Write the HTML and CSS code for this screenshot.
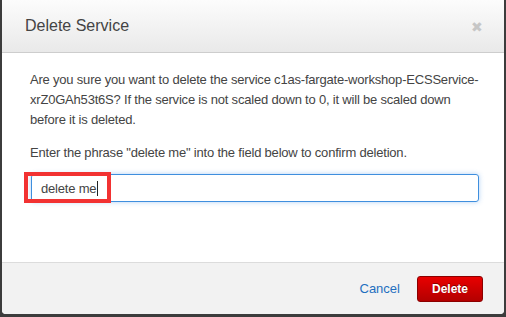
FILE: index.html
```html
<!doctype html>
<html lang="en">
  <head>
    <meta charset="UTF-8" />
    <title>Delete Service</title>
    <link rel="stylesheet" href="styles.css">
  </head>
  <body>
    <div class="c-modal">
      <div class="c-modal__header">
        <h1 class="c-modal__title">Delete Service</h1>
        <span class="c-modal__close">&#x2716;</span>
      </div>

      <div class="c-modal__body">
        <p>
          Are you sure you want to delete the service c1as-fargate-workshop-ECSService-xrZ0GAh53t6S? If the service is not
          scaled down to 0, it will be scaled down before it is deleted.
        </p>

        <p>Enter the phrase "delete me" into the field below to confirm deletion.</p>

        <div class="c-field">
          <div class="c-field__input">delete me<span class="c-field__caret"></span></div>
          <div class="c-field__highlight"></div>
        </div>
      </div>

      <div class="c-modal__footer">
        <a class="c-modal__cancel" href="#">Cancel</a>
        <button class="c-modal__delete" type="button">Delete</button>
      </div>
    </div>
  </body>
</html>
```

FILE: styles.css
```css
html,
body {
  margin: 0;
  padding: 0;
  height: 100%;
}

body {
  background: #3c3c3c;
  font-family: 'Liberation Sans', Arial, sans-serif;
  color: #444;
  overflow: hidden;
}

.c-modal {
  display: flex;
  flex-direction: column;
  height: 314px;
  margin: 0 2px 0 2px;
  background: #fff;
  border-radius: 0 0 4px 4px;
  overflow: hidden;
}

.c-modal__header {
  display: flex;
  align-items: center;
  justify-content: space-between;
  height: 52px;
  padding: 0 21px 0 23px;
  background: linear-gradient(#fcfcfc, #e9e9e9);
  border-bottom: 1px solid #cdcdcd;
}

.c-modal__title {
  margin: 0;
  font-size: 16px;
  font-weight: normal;
  color: #444;
}

.c-modal__close {
  font-size: 14px;
  color: #c6c6c6;
  padding-top: 2px;
}

.c-modal__body {
  flex: 1;
  padding: 17px 18px 0 28px;
}

.c-modal__body p {
  margin: 0 0 13px;
  font-size: 13px;
  line-height: 20px;
  letter-spacing: -0.2px;
  color: #444;
}

.c-modal__body p:nth-of-type(2) {
  margin-bottom: 11px;
}

.c-field {
  position: relative;
}

.c-field__input {
  display: flex;
  align-items: center;
  height: 26px;
  width: 428px;
  margin-left: 1px;
  padding: 0 9px;
  border: 1px solid #3f8fde;
  border-radius: 3px;
  box-shadow: 0 0 5px rgba(80, 150, 230, 0.45);
  font-size: 13px;
  letter-spacing: -0.2px;
  color: #444;
}

.c-field__caret {
  width: 1px;
  height: 15px;
  margin-left: 1px;
  background: #222;
}

.c-field__highlight {
  position: absolute;
  top: -2px;
  left: -6px;
  width: 79px;
  height: 23px;
  border: 4px solid #f23232;
}

.c-modal__footer {
  display: flex;
  align-items: center;
  justify-content: flex-end;
  gap: 17px;
  height: 51px;
  padding: 0 21px 0 0;
  background: #f2f2f2;
  border-top: 1px solid #dcdcdc;
}

.c-modal__cancel {
  font-size: 13px;
  color: #1f6fbf;
  text-decoration: none;
}

.c-modal__delete {
  height: 26px;
  padding: 0 14px;
  font-family: 'Liberation Sans', Arial, sans-serif;
  font-size: 12px;
  font-weight: bold;
  color: #fff;
  text-shadow: 0 -1px 0 rgba(0, 0, 0, 0.4);
  background: linear-gradient(#e80000, #b30000);
  border: 1px solid #8c0000;
  border-radius: 3px;
}
```
